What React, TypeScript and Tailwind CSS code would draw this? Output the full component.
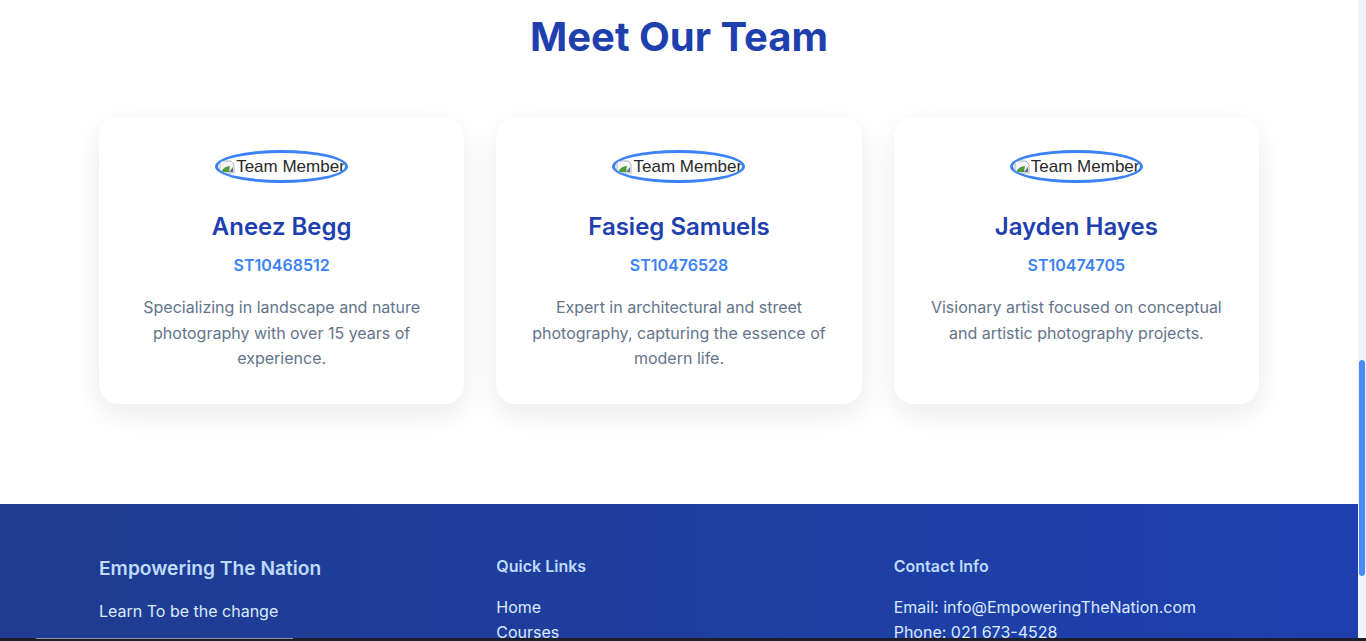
import React from 'react'

const TeamMembers = [
  {
    name: 'Aneez Begg',
    id: 'ST10468512',
    bio: 'Specializing in landscape and nature photography with over 15 years of experience.',
  },
  {
    name: 'Fasieg Samuels',
    id: 'ST10476528',
    bio: 'Expert in architectural and street photography, capturing the essence of modern life.',
  },
  {
    name: 'Jayden Hayes',
    id: 'ST10474705',
    bio: 'Visionary artist focused on conceptual and artistic photography projects.',
  },
]

const QuickLinks = ['Home', 'Courses', 'Contact']

// broken image placeholder, as the browser draws it
const BrokenImage = () => (
  <svg width="16" height="16" viewBox="0 0 16 16" className="shrink-0">
    <path d="M1 2h11l3 3v9H1z" fill="#f3f4f6" stroke="#9ca3af" strokeWidth="0.8" />
    <path d="M2 13c2-4 5-6 9-6l-1 6z" fill="#4d9b3a" />
    <path d="M10 13l4-5v5z" fill="#6b7280" />
  </svg>
)

const MemberCard = ({ name, id, bio }: { name: string; id: string; bio: string }) => {
  return (
    <div className="flex flex-col items-center rounded-[20px] bg-white px-8 pt-[33px] pb-8 text-center shadow-[0_10px_30px_rgba(15,23,42,0.09)]">
      <div className="flex h-[33px] w-[133px] items-center gap-[1px] overflow-hidden whitespace-nowrap rounded-[50%] border-[3px] border-[#3b82f6] pl-[1px] font-['Liberation_Sans',Arial,sans-serif] text-[17px] leading-none text-[#2a2a2a]">
        <BrokenImage />
        <span>Team Member</span>
      </div>
      <h3 className="mt-[28px] text-[24px] leading-[32px] font-semibold text-[#1e40af]">
        {name}
      </h3>
      <p className="mt-[10px] text-[16px] leading-[24px] font-semibold text-[#3b82f6]">
        {id}
      </p>
      <p className="mt-[18px] text-[16px] leading-[25.6px] text-[#64748b]">{bio}</p>
    </div>
  )
}

const App = () => {
  return (
    <div className="relative flex h-[641px] w-full overflow-hidden bg-white font-['Inter','Noto_Sans',sans-serif]">
      <div className="flex min-w-0 flex-1 flex-col">
        <section id="TeamSection" className="pt-[13px] pb-[100px]">
          <h2 className="text-center text-[40px] leading-[48px] font-bold text-[#1e40af]">
            Meet Our Team
          </h2>
          <div className="mx-auto mt-[56px] grid w-[1160px] grid-cols-3 gap-8">
            {TeamMembers.map((m) => (
              <MemberCard key={m.id} name={m.name} id={m.id} bio={m.bio} />
            ))}
          </div>
        </section>
        <footer className="flex-1 bg-linear-to-r from-[#1f3c90] to-[#1e40af] pt-[50px]">
          <div className="mx-auto grid w-[1160px] grid-cols-3 gap-8">
            <div className="flex flex-col">
              <h3 className="text-[19.2px] leading-[28.8px] font-semibold text-[#bfdbfe]">
                Empowering The Nation
              </h3>
              <p className="mt-[16px] text-[16px] leading-[24px] text-[#dbeafe]">
                Learn To be the change
              </p>
            </div>
            <div className="flex flex-col">
              <h3 className="text-[16px] leading-[24px] font-semibold text-[#bfdbfe]">
                Quick Links
              </h3>
              <ul className="mt-[17px] flex flex-col gap-[1px]">
                {QuickLinks.map((l) => (
                  <li key={l} className="text-[16px] leading-[24px] text-[#dbeafe]">
                    {l}
                  </li>
                ))}
              </ul>
            </div>
            <div className="flex flex-col">
              <h3 className="text-[16px] leading-[24px] font-semibold text-[#bfdbfe]">
                Contact Info
              </h3>
              <div className="mt-[17px] flex flex-col gap-[1px] text-[16px] leading-[24px] text-[#dbeafe]">
                <p>Email: info@EmpoweringTheNation.com</p>
                <p>Phone: 021 673-4528</p>
              </div>
            </div>
          </div>
        </footer>
      </div>
      <div id="Scrollbar" className="relative w-2 shrink-0 bg-[#f1f5f9]">
        <div className="absolute top-[360px] left-[1px] h-[216px] w-[6px] rounded-full bg-[#4a8cf2]" />
      </div>
      <div className="absolute right-0 bottom-0 left-0 h-[3px] bg-[#1c1f2b]">
        <div className="ml-[36px] h-[1px] w-[257px] bg-[#8d93a5]" />
      </div>
    </div>
  )
}

export default App
